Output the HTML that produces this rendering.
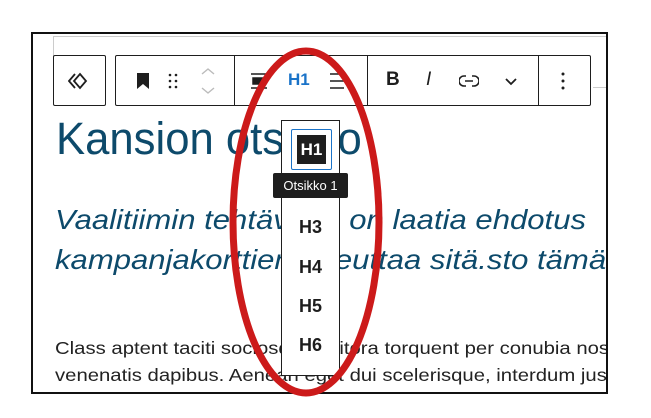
<!DOCTYPE html>
<html><head><meta charset="utf-8"><style>
*{margin:0;padding:0;box-sizing:border-box}
body{width:651px;height:418px;background:#fff;position:relative;overflow:hidden;font-family:"Liberation Sans",sans-serif}
.frame{position:absolute;left:31px;top:32px;width:577px;height:362px;border:2px solid #111;overflow:hidden;background:#fff}
.abs{position:absolute}
.tb{position:absolute;top:21px;height:51px;border:1px solid #1e1e1e;background:#fff;border-radius:2px}
.h1{font-size:45px;color:#0d4a6b;left:23px;top:79px;white-space:nowrap;transform:scaleX(0.97);transform-origin:left}
.sub{font-size:28px;font-style:italic;color:#0d4a6b;left:22px;white-space:nowrap;transform:scaleX(1.11);transform-origin:left}
.body{font-size:17.5px;color:#222;left:22px;white-space:nowrap;transform:scaleX(1.16);transform-origin:left}
.pop{position:absolute;left:248px;top:86px;width:59px;height:256px;border:1px solid #1e1e1e;background:#fff}
.hx{position:absolute;left:0;width:57px;text-align:center;font-weight:bold;font-size:18px;color:#1e1e1e}
</style></head><body>
<div class="frame">
  <div class="abs" style="left:20px;top:2px;width:560px;height:1px;background:#ccc"></div>
  <div class="abs" style="left:20px;top:2px;width:1px;height:52px;background:#ccc"></div>
  <div class="abs" style="left:560px;top:53px;width:20px;height:1px;background:#ccc"></div>
  <div class="sub abs" style="top:170px">Vaalitiimin tehtävänä on laatia ehdotus</div>
  <div class="sub abs" style="top:210px">kampanjakorttien toteuttaa sitä.sto tämä</div>
  <div class="body abs" style="top:304px">Class aptent taciti sociosqu ad litora torquent per conubia nostra</div>
  <div class="body abs" style="top:331px">venenatis dapibus. Aenean eget dui scelerisque, interdum justo</div>
  <div class="h1 abs">Kansion otsikko</div>
  <div class="tb" style="left:20px;width:53px">
    <svg class="abs" style="left:14px;top:14px" width="24" height="22" viewBox="0 0 24 22"><path d="M7 4L1 11L7 18M12 4L18 11L12 18L6 11Z" fill="none" stroke="#1e1e1e" stroke-width="1.8"/></svg>
  </div>
  <div class="tb" style="left:82px;width:476px">
    <svg class="abs" style="left:20px;top:16px" width="14" height="18"><path d="M1 1H13V17L7 12L1 17Z" fill="#1e1e1e"/></svg>
    <svg class="abs" style="left:52px;top:16px" width="10" height="18"><g fill="#1e1e1e"><circle cx="2" cy="3" r="1.3"/><circle cx="8" cy="3" r="1.3"/><circle cx="2" cy="9" r="1.3"/><circle cx="8" cy="9" r="1.3"/><circle cx="2" cy="15" r="1.3"/><circle cx="8" cy="15" r="1.3"/></g></svg>
    <svg class="abs" style="left:84px;top:10px" width="16" height="30"><path d="M2 8L8 3L14 8M2 22L8 27L14 22" fill="none" stroke="#bbb" stroke-width="1.4"/></svg>
    <div class="abs" style="left:118px;top:-1px;width:1px;height:51px;background:#1e1e1e"></div>
    <svg class="abs" style="left:134px;top:16px" width="18" height="18"><path d="M1 2H17M3 6H15V12H3ZM1 16H17" fill="#1e1e1e" stroke="#1e1e1e" stroke-width="1.5"/></svg>
    <div class="abs" style="left:172px;top:14px;font-weight:bold;font-size:17px;color:#1a73c8">H1</div>
    <svg class="abs" style="left:214px;top:16px" width="14" height="18"><path d="M0 2H14M0 9H14M0 16H14" stroke="#1e1e1e" stroke-width="1.5"/></svg>
    <div class="abs" style="left:251px;top:-1px;width:1px;height:51px;background:#1e1e1e"></div>
    <div class="abs" style="left:270px;top:13px;font-weight:bold;font-size:19px;color:#1e1e1e">B</div>
    <div class="abs" style="left:310px;top:13px;font-style:italic;font-size:19px;color:#1e1e1e">I</div>
    <svg class="abs" style="left:343px;top:18px" width="20" height="14"><path d="M7 2H5A5 5 0 0 0 5 12H7M13 2H15A5 5 0 0 1 15 12H13M6 7H14" fill="none" stroke="#1e1e1e" stroke-width="1.6"/></svg>
    <svg class="abs" style="left:388px;top:21px" width="14" height="10"><path d="M2 2L7 7L12 2" fill="none" stroke="#1e1e1e" stroke-width="1.8"/></svg>
    <div class="abs" style="left:422px;top:-1px;width:1px;height:51px;background:#1e1e1e"></div>
    <svg class="abs" style="left:445px;top:15px" width="4" height="20"><g fill="#1e1e1e"><circle cx="2" cy="3" r="1.5"/><circle cx="2" cy="10" r="1.5"/><circle cx="2" cy="17" r="1.5"/></g></svg>
  </div>
  <div class="pop">
    <div class="abs" style="left:9px;top:8px;width:41px;height:41px;border:1.5px solid #1a73c8;border-radius:2px"></div>
    <div class="abs" style="left:15px;top:14px;width:29px;height:29px;background:#1e1e1e;color:#fff;font-weight:bold;font-size:17px;text-align:center;line-height:29px">H1</div>
    <div class="hx" style="top:96px">H3</div>
    <div class="hx" style="top:136px">H4</div>
    <div class="hx" style="top:175px">H5</div>
    <div class="hx" style="top:214px">H6</div>
  </div>
  <div class="abs" style="left:240px;top:139px;width:75px;height:25px;background:#1e1e1e;color:#fff;font-size:13px;line-height:25px;text-align:center;border-radius:2px">Otsikko 1</div>
</div>
<svg class="abs" style="left:0;top:0" width="651" height="418"><ellipse cx="306" cy="222" rx="73" ry="171" fill="none" stroke="#cc1a1a" stroke-width="7"/></svg>
</body></html>
